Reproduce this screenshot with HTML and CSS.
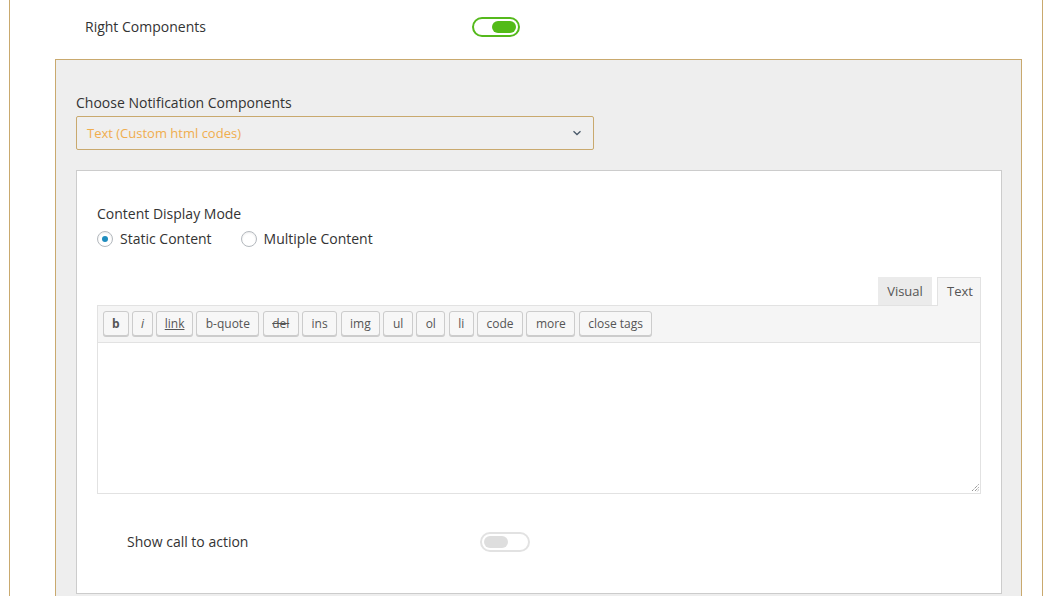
FILE: index.html
```html
<!DOCTYPE html>
<html>
<head>
<meta charset="utf-8">
<link rel="stylesheet" href="styles.css">
</head>
<body>
<div class="frame">
  <div class="row top-row">
    <span class="row-label rc-label">Right Components</span>
    <span class="switch on"><span class="knob"></span></span>
  </div>
  <div class="panel">
    <div class="field-label">Choose Notification Components</div>
    <div class="select">
      <span class="select-text">Text (Custom html codes)</span>
      <svg class="chev" width="10" height="6" viewBox="0 0 10 6"><path d="M1.5 1.2 L5 4.5 L8.5 1.2" fill="none" stroke="#4a5a6a" stroke-width="1.3"/></svg>
    </div>
    <div class="card">
      <div class="field-label">Content Display Mode</div>
      <div class="radios">
        <label class="radio"><span class="dot checked"></span>Static Content</label>
        <label class="radio"><span class="dot"></span>Multiple Content</label>
      </div>
      <div class="editor">
        <div class="tabs">
          <span class="tab">Visual</span>
          <span class="tab active">Text</span>
        </div>
        <div class="toolbar">
          <span class="qt bold">b</span>
          <span class="qt ital">i</span>
          <span class="qt link">link</span>
          <span class="qt">b-quote</span>
          <span class="qt del">del</span>
          <span class="qt">ins</span>
          <span class="qt">img</span>
          <span class="qt">ul</span>
          <span class="qt">ol</span>
          <span class="qt">li</span>
          <span class="qt">code</span>
          <span class="qt">more</span>
          <span class="qt">close tags</span>
        </div>
        <div class="textarea">
          <svg class="grip" width="8" height="8" viewBox="0 0 8 8"><path d="M7.5 0.5 L0.5 7.5 M7.5 3.5 L3.5 7.5 M7.5 6 L6 7.5" stroke="#666" stroke-width="1" stroke-dasharray="1 1"/></svg>
        </div>
      </div>
      <div class="row cta-row">
        <span class="row-label cta-label">Show call to action</span>
        <span class="switch off"><span class="knob"></span></span>
      </div>
    </div>
  </div>
</div>
</body>
</html>
```

FILE: styles.css
```css
html, body {
  margin: 0;
  padding: 0;
  background: #ffffff;
  overflow: hidden;
}
body {
  font-family: "Open Sans", "Noto Sans", sans-serif;
  color: #333;
  font-size: 14px;
  width: 1051px;
  height: 596px;
}
.frame {
  margin: 0 8px 0 9px;
  border-left: 1px solid #c9a96e;
  border-right: 1px solid #c9a96e;
  height: 620px;
  box-sizing: border-box;
}
.row {
  display: flex;
  align-items: center;
}
.top-row {
  padding: 17px 0 0 75px;
  height: 20px;
}
.row-label {
  font-size: 14px;
  color: #333;
  line-height: 20px;
}
.rc-label { width: 387px; }
.switch {
  position: relative;
  width: 48px;
  height: 20px;
  border-radius: 12px;
  box-sizing: border-box;
  display: inline-block;
}
.switch .knob {
  position: absolute;
  top: 2px;
  height: 12px;
  width: 24px;
  border-radius: 7px;
}
.switch.on {
  border: 2px solid #55b91c;
  background: #fff;
}
.switch.on .knob {
  right: 2px;
  background: #53bb18;
}
.switch.off {
  border: 2px solid #e2e2e2;
  background: #fff;
  width: 50px;
}
.switch.off .knob {
  left: 2px;
  background: #dedede;
}
.panel {
  margin: 22px 20px 0 45px;
  border: 1px solid #c9a96e;
  border-bottom: none;
  background: #eeeeee;
  padding: 33px 19px 0 20px;
  height: 560px;
  box-sizing: border-box;
}
.field-label {
  font-size: 14px;
  line-height: 20px;
  color: #333;
}
.select {
  margin-top: 3px;
  width: 518px;
  height: 34px;
  box-sizing: border-box;
  border: 1px solid #c9a96e;
  border-radius: 2px;
  background: #efefef;
  display: flex;
  align-items: center;
  justify-content: space-between;
  padding: 0 11px 0 10px;
}
.select-text {
  color: #f0ad4e;
  font-size: 13px;
}
.card {
  margin-top: 20px;
  background: #fff;
  border: 1px solid #cccccc;
  padding: 33px 20px 0 20px;
  height: 424px;
  box-sizing: border-box;
}
.radios {
  display: flex;
  margin-top: 5px;
  line-height: 20px;
}
.radio {
  display: flex;
  align-items: center;
  font-size: 14px;
  color: #333;
  margin-right: 29px;
}
.dot {
  width: 16px;
  height: 16px;
  box-sizing: border-box;
  border: 1px solid #b4b9be;
  border-radius: 50%;
  margin-right: 7px;
  position: relative;
  background: #fff;
  box-shadow: inset 0 1px 2px rgba(0,0,0,0.08);
}
.dot.checked::after {
  content: "";
  position: absolute;
  left: 4px;
  top: 4px;
  width: 6px;
  height: 6px;
  border-radius: 50%;
  background: #1e8cbe;
}
.editor {
  margin-top: 28px;
}
.tabs {
  display: flex;
  justify-content: flex-end;
  gap: 5px;
  height: 28px;
}
.tab {
  font-family: "Open Sans", "Noto Sans", sans-serif;
  font-size: 13px;
  color: #555;
  background: #ebebeb;
  height: 28px;
  line-height: 28px;
  padding: 0 9px;
  box-sizing: border-box;
  width: 54px;
  text-align: center;
}
.tab.active {
  background: #f5f5f5;
  border: 1px solid #e2e2e2;
  border-bottom: none;
  height: 29px;
  width: 44px;
  line-height: 27px;
  position: relative;
  z-index: 1;
}
.toolbar {
  height: 38px;
  box-sizing: border-box;
  background: #f5f5f5;
  border: 1px solid #e2e2e2;
  display: flex;
  align-items: center;
  gap: 3.3px;
  padding: 0 0 0 5px;
}
.qt {
  font-size: 12px;
  color: #555;
  height: 25px;
  line-height: 23px;
  box-sizing: border-box;
  border: 1px solid #cccccc;
  border-radius: 3px;
  background: #f7f7f7;
  box-shadow: 0 1px 0 #ccc;
  padding: 0 8.5px;
  margin-top: -1px;
}
.qt.bold { font-weight: bold; padding: 0 8px; }
.qt.ital { font-style: italic; padding: 0 8px; }
.qt.link { text-decoration: underline; padding: 0 7.5px; }
.qt.del { text-decoration: line-through; }
.textarea {
  height: 151px;
  box-sizing: border-box;
  border: 1px solid #e2e2e2;
  border-top: none;
  background: #fff;
  position: relative;
}
.grip {
  position: absolute;
  right: 1px;
  bottom: 1px;
}
.cta-row {
  margin-top: 38px;
  padding-left: 30px;
}
.cta-label { width: 353px; }
```
